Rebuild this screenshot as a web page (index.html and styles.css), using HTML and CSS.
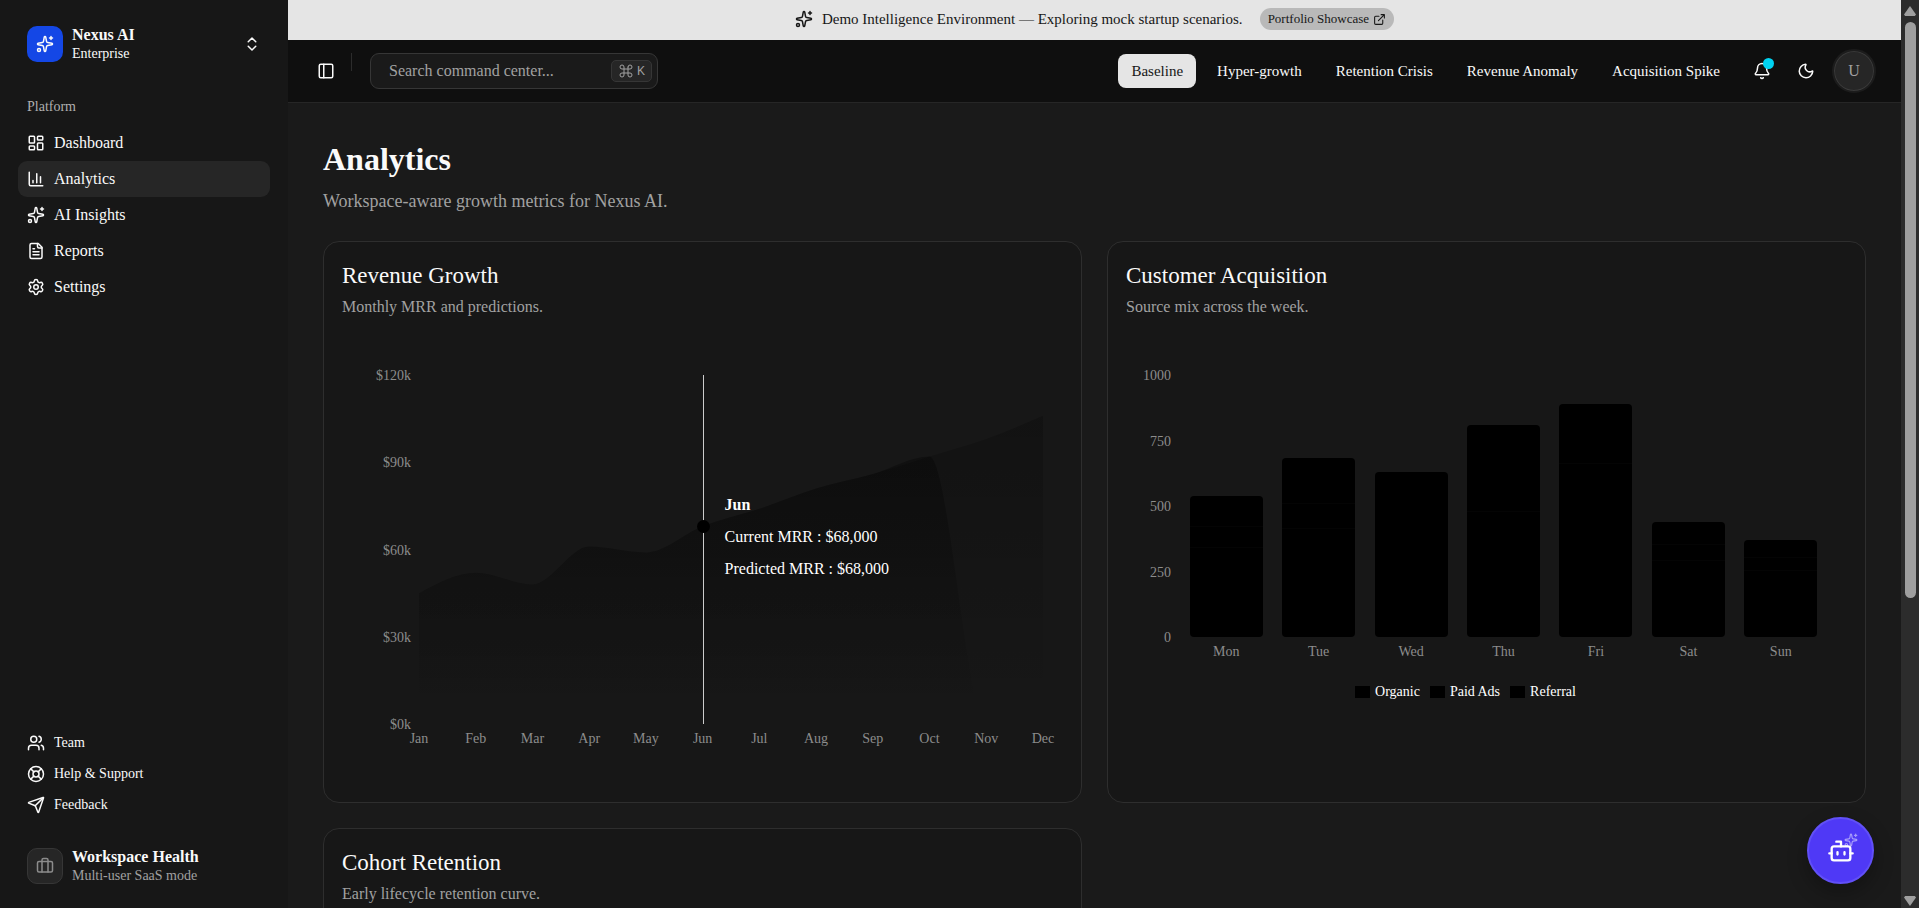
FILE: index.html
```html
<!DOCTYPE html>
<html lang="en">
<head>
  <meta charset="UTF-8">
  <meta name="viewport" content="width=device-width, initial-scale=1.0">
  <title>Analytics - Nexus AI</title>
  <link rel="stylesheet" href="styles.css">
</head>

<body>
  <svg class="sprite" aria-hidden="true">
    <symbol id="sparkles" viewBox="0 0 24 24">
      <path d="M11.017 2.814a1 1 0 0 1 1.966 0l1.051 5.558a2 2 0 0 0 1.594 1.594l5.558 1.051a1 1 0 0 1 0 1.966l-5.558 1.051a2 2 0 0 0-1.594 1.594l-1.051 5.558a1 1 0 0 1-1.966 0l-1.051-5.558a2 2 0 0 0-1.594-1.594l-5.558-1.051a1 1 0 0 1 0-1.966l5.558-1.051a2 2 0 0 0 1.594-1.594z"/>
      <path d="M20 2v4M22 4h-4"/>
      <circle cx="4" cy="20" r="2"/>
    </symbol>
    <symbol id="dashboard" viewBox="0 0 24 24">
      <rect x="3" y="3" width="7" height="9" rx="1"/>
      <rect x="14" y="3" width="7" height="5" rx="1"/>
      <rect x="14" y="12" width="7" height="9" rx="1"/>
      <rect x="3" y="16" width="7" height="5" rx="1"/>
    </symbol>
    <symbol id="chart" viewBox="0 0 24 24">
      <path d="M3 3v16a2 2 0 0 0 2 2h16M18 17V9M13 17V5M8 17v-3"/>
    </symbol>
    <symbol id="file" viewBox="0 0 24 24">
      <path d="M15 2H6a2 2 0 0 0-2 2v16a2 2 0 0 0 2 2h12a2 2 0 0 0 2-2V7Z"/>
      <path d="M14 2v4a2 2 0 0 0 2 2h4M10 9H8M16 13H8M16 17H8"/>
    </symbol>
    <symbol id="settings" viewBox="0 0 24 24">
      <path d="M9.671 4.136a2.34 2.34 0 0 1 4.659 0 2.34 2.34 0 0 0 3.319 1.915 2.34 2.34 0 0 1 2.33 4.033 2.34 2.34 0 0 0 0 3.831 2.34 2.34 0 0 1-2.33 4.033 2.34 2.34 0 0 0-3.319 1.915 2.34 2.34 0 0 1-4.659 0 2.34 2.34 0 0 0-3.32-1.915 2.34 2.34 0 0 1-2.33-4.033 2.34 2.34 0 0 0 0-3.831A2.34 2.34 0 0 1 6.35 6.051a2.34 2.34 0 0 0 3.319-1.915"/>
      <circle cx="12" cy="12" r="3"/>
    </symbol>
    <symbol id="chevrons" viewBox="0 0 24 24">
      <path d="m7 15 5 5 5-5M7 9l5-5 5 5"/>
    </symbol>
    <symbol id="users" viewBox="0 0 24 24">
      <path d="M16 21v-2a4 4 0 0 0-4-4H6a4 4 0 0 0-4 4v2M16 3.128a4 4 0 0 1 0 7.744M22 21v-2a4 4 0 0 0-3-3.87"/>
      <circle cx="9" cy="7" r="4"/>
    </symbol>
    <symbol id="buoy" viewBox="0 0 24 24">
      <circle cx="12" cy="12" r="10"/>
      <path d="m4.93 4.93 4.24 4.24M14.83 9.17l4.24-4.24M14.83 14.83l4.24 4.24M9.17 14.83l-4.24 4.24"/>
      <circle cx="12" cy="12" r="4"/>
    </symbol>
    <symbol id="send" viewBox="0 0 24 24">
      <path d="M14.536 21.686a.5.5 0 0 0 .937-.024l6.5-19a.496.496 0 0 0-.635-.635l-19 6.5a.5.5 0 0 0-.024.937l7.93 3.18a2 2 0 0 1 1.112 1.11z"/>
      <path d="m21.854 2.147-10.94 10.939"/>
    </symbol>
    <symbol id="briefcase" viewBox="0 0 24 24">
      <path d="M16 20V4a2 2 0 0 0-2-2h-4a2 2 0 0 0-2 2v16"/>
      <rect x="2" y="6" width="20" height="14" rx="2"/>
    </symbol>
    <symbol id="panel" viewBox="0 0 24 24">
      <rect x="3" y="3" width="18" height="18" rx="2"/>
      <path d="M9 3v18"/>
    </symbol>
    <symbol id="external" viewBox="0 0 24 24">
      <path d="M15 3h6v6M10 14 21 3M18 13v6a2 2 0 0 1-2 2H5a2 2 0 0 1-2-2V8a2 2 0 0 1 2-2h6"/>
    </symbol>
    <symbol id="command" viewBox="0 0 24 24">
      <path d="M15 6v12a3 3 0 1 0 3-3H6a3 3 0 1 0 3 3V6a3 3 0 1 0-3 3h12a3 3 0 1 0-3-3"/>
    </symbol>
    <symbol id="bell" viewBox="0 0 24 24">
      <path d="M10.268 21a2 2 0 0 0 3.464 0"/>
      <path d="M3.262 15.326A1 1 0 0 0 4 17h16a1 1 0 0 0 .74-1.673C19.41 13.956 18 12.499 18 8A6 6 0 0 0 6 8c0 4.499-1.411 5.956-2.738 7.326"/>
    </symbol>
    <symbol id="moon" viewBox="0 0 24 24">
      <path d="M20.985 12.486a9 9 0 1 1-9.473-9.472c.405-.022.617.46.402.803a6 6 0 0 0 8.268 8.268c.344-.215.825-.004.803.401"/>
    </symbol>
    <symbol id="bot" viewBox="0 0 24 24">
      <path d="M12 8V4H8M2 14h2M20 14h2M15 13v2M9 13v2"/>
      <rect x="4" y="8" width="16" height="12" rx="2"/>
    </symbol>
  </svg>

  <div class="app">
    <aside class="sidebar">
      <button type="button" class="workspace">
        <span class="logo"><svg class="icon"><use href="#sparkles"/></svg></span>
        <span class="two-lines">
          <strong>Nexus AI</strong>
          <small>Enterprise</small>
        </span>
        <svg class="icon"><use href="#chevrons"/></svg>
      </button>

      <nav class="nav">
        <h2 class="nav-label">Platform</h2>
        <a href="#"><svg class="icon"><use href="#dashboard"/></svg>Dashboard</a>
        <a href="#" class="active"><svg class="icon"><use href="#chart"/></svg>Analytics</a>
        <a href="#"><svg class="icon"><use href="#sparkles"/></svg>AI Insights</a>
        <a href="#"><svg class="icon"><use href="#file"/></svg>Reports</a>
        <a href="#"><svg class="icon"><use href="#settings"/></svg>Settings</a>
      </nav>

      <nav class="nav nav-small">
        <a href="#"><svg class="icon"><use href="#users"/></svg>Team</a>
        <a href="#"><svg class="icon"><use href="#buoy"/></svg>Help &amp; Support</a>
        <a href="#"><svg class="icon"><use href="#send"/></svg>Feedback</a>
      </nav>

      <div class="workspace">
        <span class="logo logo-muted"><svg class="icon"><use href="#briefcase"/></svg></span>
        <span class="two-lines muted">
          <strong>Workspace Health</strong>
          <small>Multi-user SaaS mode</small>
        </span>
      </div>
    </aside>

    <div class="page">
      <div class="banner">
        <svg class="icon"><use href="#sparkles"/></svg>
        <span>Demo Intelligence Environment — Exploring mock startup scenarios.</span>
        <a href="#" class="pill">Portfolio Showcase <svg class="icon icon-small"><use href="#external"/></svg></a>
      </div>

      <header class="topbar">
        <button type="button" class="icon-button" aria-label="Toggle sidebar"><svg class="icon"><use href="#panel"/></svg></button>
        <span class="separator"></span>
        <label class="search">
          <input type="text" placeholder="Search command center..." aria-label="Search command center">
          <kbd><svg class="icon"><use href="#command"/></svg>K</kbd>
        </label>
        <div class="scenarios">
          <button type="button" class="selected">Baseline</button>
          <button type="button">Hyper-growth</button>
          <button type="button">Retention Crisis</button>
          <button type="button">Revenue Anomaly</button>
          <button type="button">Acquisition Spike</button>
        </div>
        <div class="actions">
          <button type="button" class="icon-button" aria-label="Notifications"><svg class="icon"><use href="#bell"/></svg><span class="badge"></span></button>
          <button type="button" class="icon-button" aria-label="Toggle theme"><svg class="icon"><use href="#moon"/></svg></button>
          <button type="button" class="avatar" aria-label="Account">U</button>
        </div>
      </header>

      <main>
        <h1>Analytics</h1>
        <p class="subtitle">Workspace-aware growth metrics for Nexus AI.</p>

        <div class="cards">
          <section class="card">
            <h2>Revenue Growth</h2>
            <p>Monthly MRR and predictions.</p>
            <div class="chart chart-revenue">
              <ul class="y-axis"><li>$120k</li><li>$90k</li><li>$60k</li><li>$30k</li><li>$0k</li></ul>
              <div class="plot">
                <svg viewBox="0 0 1100 120" preserveAspectRatio="none" role="img" aria-label="Monthly MRR">
                  <defs>
                    <linearGradient id="fill-current" x1="0" y1="0" x2="0" y2="1">
                      <stop offset="5%" stop-color="#000" stop-opacity="0.3"/>
                      <stop offset="95%" stop-color="#000" stop-opacity="0"/>
                    </linearGradient>
                    <linearGradient id="fill-predicted" x1="0" y1="0" x2="0" y2="1">
                      <stop offset="5%" stop-color="#000" stop-opacity="0.2"/>
                      <stop offset="95%" stop-color="#000" stop-opacity="0"/>
                    </linearGradient>
                  </defs>
                  <path id="area-predicted" fill="url(#fill-predicted)"/>
                  <path id="area-current" fill="url(#fill-current)"/>
                </svg>
                <!-- June is 5/11 of the width, $68k is 56.67% of the height -->
                <div class="cursor" style="left: 45.45%">
                  <span class="dot" style="bottom: 56.67%"></span>
                  <div class="tooltip">
                    <strong>Jun</strong>
                    <span>Current MRR : $68,000</span>
                    <span>Predicted MRR : $68,000</span>
                  </div>
                </div>
              </div>
              <ul class="x-axis"><li>Jan</li><li>Feb</li><li>Mar</li><li>Apr</li><li>May</li><li>Jun</li><li>Jul</li><li>Aug</li><li>Sep</li><li>Oct</li><li>Nov</li><li>Dec</li></ul>
            </div>
          </section>

          <section class="card">
            <h2>Customer Acquisition</h2>
            <p>Source mix across the week.</p>
            <div class="chart chart-acquisition">
              <ul class="y-axis"><li>1000</li><li>750</li><li>500</li><li>250</li><li>0</li></ul>
              <div class="plot bars">
                <div class="bar" style="height: 54%"><span style="height: 22%"></span><span style="height: 15%"></span></div>
                <div class="bar" style="height: 68.5%"><span style="height: 26%"></span><span style="height: 14%"></span></div>
                <div class="bar" style="height: 63%"></div>
                <div class="bar" style="height: 81%"><span style="height: 41%"></span></div>
                <div class="bar" style="height: 89%"><span style="height: 26%"></span></div>
                <div class="bar" style="height: 44%"><span style="height: 20%"></span><span style="height: 14%"></span></div>
                <div class="bar" style="height: 37%"><span style="height: 19%"></span><span style="height: 13%"></span></div>
              </div>
              <ul class="x-axis bands"><li>Mon</li><li>Tue</li><li>Wed</li><li>Thu</li><li>Fri</li><li>Sat</li><li>Sun</li></ul>
              <ul class="legend"><li>Organic</li><li>Paid Ads</li><li>Referral</li></ul>
            </div>
          </section>

          <section class="card">
            <h2>Cohort Retention</h2>
            <p>Early lifecycle retention curve.</p>
            <div class="chart"></div>
          </section>
        </div>
      </main>
    </div>

    <div class="scrollbar" aria-hidden="true">
      <span class="arrow arrow-up"></span>
      <span class="thumb"></span>
      <span class="arrow arrow-down"></span>
    </div>
  </div>

  <button type="button" class="assistant" aria-label="Open assistant">
    <svg class="icon bot"><use href="#bot"/></svg>
    <svg class="icon spark"><use href="#sparkles"/></svg>
  </button>

<script>
  const current = [45, 52, 48, 61, 59, 68, 74, 81, 86, 92, 0, 0];
  const predicted = [45, 52, 48, 61, 59, 68, 74, 81, 86, 92, 98, 106];

  // monotone cubic area, one step is 100 units wide
  function areaPath(values) {
    const step = 100;
    const last = values.length - 1;
    const slopes = [];
    for (let i = 0; i < last; i++) {
      slopes.push(values[i + 1] - values[i]);
    }

    const tangents = values.map((v, i) => {
      if (i === 0 || i === last) return 0;
      const a = slopes[i - 1];
      const b = slopes[i];
      return (Math.sign(a) + Math.sign(b)) * Math.min(Math.abs(a), Math.abs(b), Math.abs(a + b) / 4);
    });
    tangents[0] = (3 * slopes[0] - tangents[1]) / 2;
    tangents[last] = (3 * slopes[last - 1] - tangents[last - 1]) / 2;

    let d = "M0," + (120 - values[0]);
    for (let i = 0; i < last; i++) {
      const x = i * step;
      d += "C" + (x + step / 3) + "," + (120 - values[i] - tangents[i] / 3)
        + " " + (x + step * 2 / 3) + "," + (120 - values[i + 1] + tangents[i + 1] / 3)
        + " " + (x + step) + "," + (120 - values[i + 1]);
    }
    return d + "V120H0Z";
  }

  document.getElementById("area-current").setAttribute("d", areaPath(current));
  document.getElementById("area-predicted").setAttribute("d", areaPath(predicted));
</script>
</body>
</html>
```

FILE: styles.css
```css
* {
  box-sizing: border-box;
}
body {
  font-family: "Liberation Serif", "Times New Roman", serif;
  font-size: 16px;
  margin: 0;
  background-color: #1a1a1a;
  color: #fafafa;
}
h1, h2, p, ul {
  margin: 0;
  padding: 0;
  font-weight: normal;
  list-style: none;
}
a {
  color: inherit;
  text-decoration: none;
}
button {
  font: inherit;
  color: inherit;
  background: none;
  border: none;
  padding: 0;
  cursor: pointer;
}
.sprite {
  display: none;
}
.icon {
  width: 18px;
  height: 18px;
  flex-shrink: 0;
  fill: none;
  stroke: currentColor;
  stroke-width: 2;
  stroke-linecap: round;
  stroke-linejoin: round;
}
.icon-small {
  width: 13px;
  height: 13px;
}
.app {
  display: flex;
  height: 100vh;
  overflow: hidden;
}

/* sidebar */
.sidebar {
  width: 288px;
  flex-shrink: 0;
  display: flex;
  flex-direction: column;
  padding: 25px 18px 23px;
  background-color: #171717;
}
.workspace {
  display: flex;
  align-items: center;
  gap: 9px;
  padding: 0 9px;
  text-align: left;
}
.logo {
  display: flex;
  align-items: center;
  justify-content: center;
  width: 36px;
  height: 36px;
  border-radius: 10px;
  background-color: #1447e6;
}
.logo-muted {
  background-color: #262626;
  border: 1px solid #363636;
  color: #8c8c8c;
}
.two-lines {
  flex: 1;
  display: flex;
  flex-direction: column;
  line-height: 19px;
}
.two-lines small {
  font-size: 14px;
}
.muted small {
  color: #a1a1a1;
}
.nav {
  display: flex;
  flex-direction: column;
  margin-top: 26px;
}
.nav-label {
  padding: 0 9px;
  font-size: 14px;
  line-height: 36px;
  color: #b0b0b0;
}
.nav a {
  display: flex;
  align-items: center;
  gap: 9px;
  height: 36px;
  padding: 0 9px;
  border-radius: 9px;
}
.nav .active {
  background-color: #262626;
}
.nav-small {
  margin-top: auto;
  margin-bottom: 27px;
  font-size: 14px;
}
.nav-small a {
  height: 31px;
}

/* top of the page */
.page {
  flex: 1;
  min-width: 0;
  overflow: hidden;
}
.banner {
  display: flex;
  align-items: center;
  justify-content: center;
  gap: 9px;
  height: 40px;
  padding-bottom: 2px;
  background-color: #e5e5e5;
  color: #171717;
  font-size: 15px;
}
.pill {
  display: flex;
  align-items: center;
  gap: 4px;
  height: 22px;
  margin-left: 8px;
  padding: 0 8px;
  border-radius: 11px;
  background-color: #b9b9b9;
  font-size: 13px;
}
.topbar {
  display: flex;
  align-items: center;
  height: 63px;
  padding: 0 25px 0 20px;
  background-color: #0f0f0f;
  border-bottom: 1px solid #262626;
}
.icon-button {
  position: relative;
  display: flex;
  align-items: center;
  justify-content: center;
  width: 36px;
  height: 36px;
}
.separator {
  align-self: flex-start;
  width: 1px;
  height: 18px;
  margin: 13px 18px 0 7px;
  background-color: #2c2c2c;
}
.search {
  display: flex;
  align-items: center;
  width: 288px;
  height: 36px;
  padding: 0 5px 0 18px;
  background-color: #1a1a1a;
  border: 1px solid #363636;
  border-radius: 9px;
}
.search input {
  flex: 1;
  min-width: 0;
  padding: 0;
  border: none;
  outline: none;
  background: none;
  font: inherit;
  color: inherit;
}
.search input::placeholder {
  color: #a1a1a1;
}
.search kbd {
  display: flex;
  align-items: center;
  gap: 3px;
  height: 22px;
  padding: 0 6px;
  border: 1px solid #363636;
  border-radius: 5px;
  background-color: #262626;
  color: #a1a1a1;
  font-family: "Liberation Sans", Arial, sans-serif;
  font-size: 12px;
}
.search kbd .icon {
  width: 16px;
  height: 16px;
  stroke-width: 1.5;
}
.scenarios {
  display: flex;
  gap: 8px;
  margin-left: auto;
}
.scenarios button {
  height: 34px;
  padding: 0 13px;
  border-radius: 8px;
  font-size: 15px;
}
.scenarios .selected {
  background-color: #e5e5e5;
  color: #171717;
}
.actions {
  display: flex;
  align-items: center;
  gap: 8px;
  margin-left: 11px;
}
.badge {
  position: absolute;
  top: 5px;
  right: 6px;
  width: 11px;
  height: 11px;
  border-radius: 50%;
  background-color: #00d3f2;
}
.avatar {
  width: 44px;
  height: 44px;
  border: 2px solid #1c1c1c;
  border-radius: 50%;
  background-color: #262626;
  box-shadow: inset 0 0 0 1px #3a3a3a;
  color: #a1a1a1;
}

/* content */
main {
  padding: 35px;
}
h1 {
  font-size: 32px;
  font-weight: bold;
  line-height: 42px;
}
.subtitle {
  margin-top: 7px;
  font-size: 18px;
  line-height: 28px;
  color: #a1a1a1;
}
.cards {
  display: grid;
  grid-template-columns: 1fr 1fr;
  gap: 25px;
  margin-top: 26px;
}
.card {
  min-height: 562px;
  padding: 20px 18px;
  background-color: #171717;
  border: 1px solid #2e2e2e;
  border-radius: 16px;
}
.card h2 {
  font-size: 23px;
  line-height: 28px;
}
.card p {
  margin-top: 6px;
  line-height: 22px;
  color: #a1a1a1;
}

/* charts */
.chart {
  display: grid;
  grid-template-columns: 45px 1fr;
  column-gap: 9px;
  margin-top: 57px;
  padding-right: 20px;
  font-size: 14px;
  color: #8c8c8c;
}
.chart-revenue {
  grid-template-columns: 69px 1fr;
  grid-template-rows: 349px auto;
  column-gap: 8px;
}
.chart-acquisition {
  grid-template-rows: 262px auto;
}
.y-axis {
  display: flex;
  flex-direction: column;
  justify-content: space-between;
  margin: 1px 0 -1px;
}
.y-axis li {
  display: flex;
  align-items: center;
  justify-content: flex-end;
  height: 0;
}
.plot {
  position: relative;
}
.plot svg {
  display: block;
  width: 100%;
  height: 100%;
}
.x-axis {
  grid-column: 2;
  display: flex;
  justify-content: space-between;
  margin-top: 6px;
  line-height: 18px;
}
.x-axis li {
  display: flex;
  justify-content: center;
  width: 0;
}
.x-axis.bands li {
  flex: 1;
}
.cursor {
  position: absolute;
  top: 0;
  bottom: 0;
  width: 1px;
  background-color: #ccc;
}
.dot {
  position: absolute;
  left: -6px;
  width: 13px;
  height: 13px;
  margin-bottom: -7px;
  border-radius: 50%;
  background-color: #000;
}
.tooltip {
  position: absolute;
  top: 119px;
  left: 22px;
  display: flex;
  flex-direction: column;
  gap: 10px;
  font-size: 16px;
  line-height: 22px;
  color: #fff;
  white-space: nowrap;
}
.bars {
  display: flex;
  align-items: flex-end;
  justify-content: space-around;
}
.bar {
  width: 11%;
  width: calc(100% / 7 * 0.79);
  border-radius: 4px;
  background-color: #000;
}
.bar span {
  display: block;
  border-bottom: 1px solid #040404;
}
.legend {
  grid-column: 1 / -1;
  display: flex;
  justify-content: center;
  gap: 10px;
  margin-top: 22px;
  padding-right: 22px;
  line-height: 18px;
  color: #fff;
}
.legend li {
  display: flex;
  align-items: center;
  gap: 5px;
}
.legend li::before {
  content: "";
  width: 15px;
  height: 12px;
  background-color: #000;
}

/* window scrollbar */
.scrollbar {
  display: grid;
  grid-template-rows: 22px 2fr 1fr 22px;
  justify-items: center;
  width: 18px;
  flex-shrink: 0;
  background-color: #2c2c2c;
}
.thumb {
  width: 11px;
  border-radius: 6px;
  background-color: #9f9f9f;
}
.arrow {
  align-self: center;
  width: 12px;
  height: 10px;
  background-color: #9f9f9f;
  clip-path: polygon(50% 0, 100% 85%, 90% 100%, 10% 100%, 0 85%);
}
.arrow-down {
  grid-row: 4;
  align-self: end;
  margin-bottom: 2px;
  clip-path: polygon(50% 100%, 100% 15%, 90% 0, 10% 0, 0 15%);
}

.assistant {
  position: fixed;
  right: 45px;
  bottom: 24px;
  display: flex;
  align-items: center;
  justify-content: center;
  width: 67px;
  height: 67px;
  border: 2px solid #6150f7;
  border-radius: 50%;
  background-color: #4f39f6;
  box-shadow: 0 8px 20px rgba(0, 0, 0, 0.3);
  color: #fff;
}
.assistant .bot {
  width: 28px;
  height: 28px;
}
.assistant .spark {
  position: absolute;
  top: 14px;
  right: 14px;
  width: 14px;
  height: 14px;
  opacity: 0.5;
}
```
